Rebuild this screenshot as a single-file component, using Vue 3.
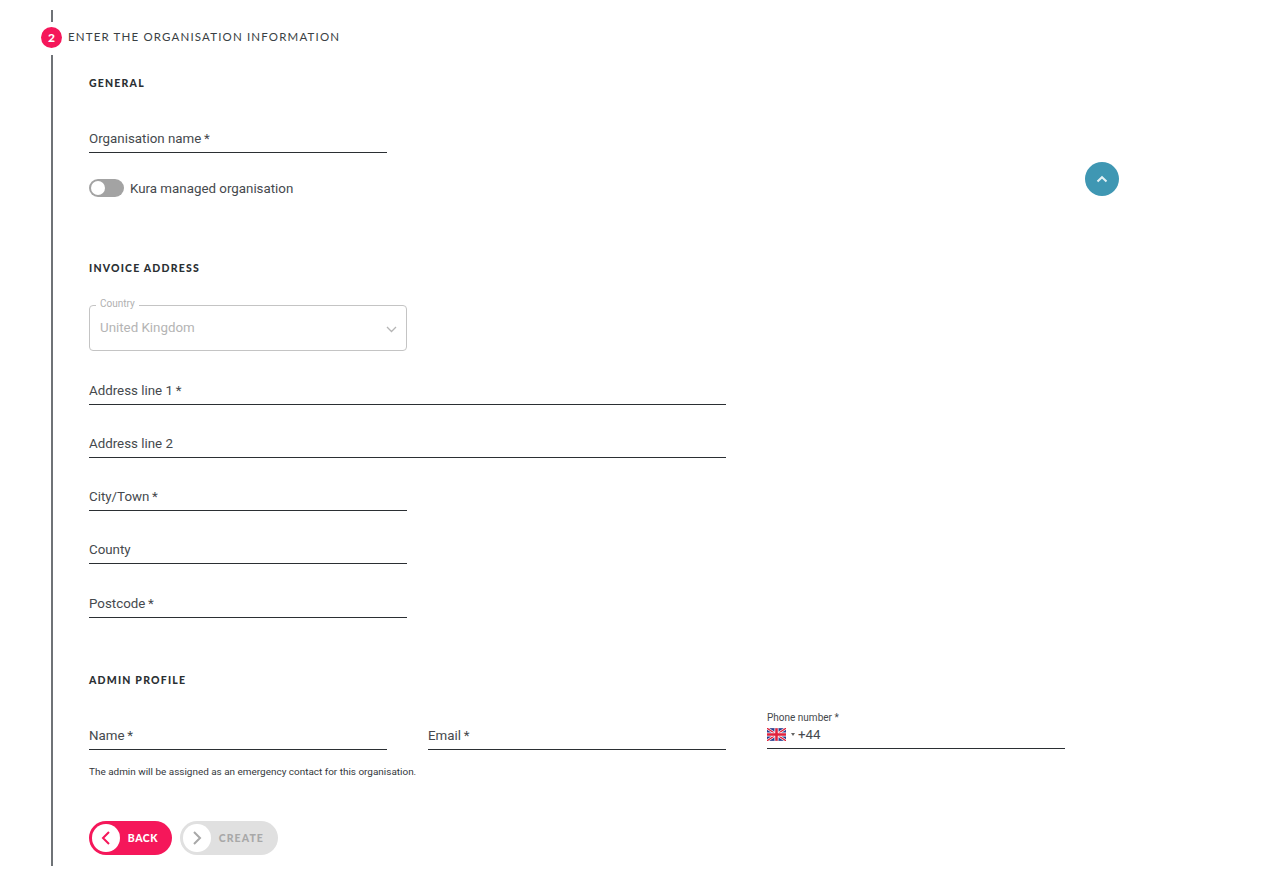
<template>
  <div class="page">
    <div class="stem"></div>
    <div class="step-head">
      <span class="step-badge">2</span>
      <span class="step-title">ENTER THE ORGANISATION INFORMATION</span>
    </div>

    <div class="step-body">
      <h3 class="section-title first">GENERAL</h3>
      <div class="field w-name first-field"><span>Organisation name&thinsp;*</span></div>

      <div class="toggle-row">
        <span class="toggle"><i></i></span>
        <span class="toggle-label">Kura managed organisation</span>
      </div>

      <h3 class="section-title invoice">INVOICE ADDRESS</h3>
      <div class="select-box">
        <span class="select-legend">Country</span>
        <span class="select-value">United Kingdom</span>
        <svg class="select-arrow" width="11" height="7" viewBox="0 0 11 7">
          <path d="M1 1 5.5 5.5 10 1" fill="none" stroke="#b5b5b5" stroke-width="1.3" />
        </svg>
      </div>

      <div class="address-fields">
        <div v-for="f in addressFields" :key="f.label" class="field" :class="f.size">
          <span>{{ f.label }}</span>
        </div>
      </div>

      <h3 class="section-title admin">ADMIN PROFILE</h3>
      <div class="admin-row">
        <div class="field w-name"><span>Name&thinsp;*</span></div>
        <div class="field w-name"><span>Email&thinsp;*</span></div>
        <div class="phone">
          <label>Phone number *</label>
          <div class="phone-input">
            <svg width="19" height="13" viewBox="0 0 60 40">
              <rect width="60" height="40" fill="#2a3c8f" />
              <path d="M0 0 60 40M60 0 0 40" stroke="#fff" stroke-width="8" />
              <path d="M0 0 60 40M60 0 0 40" stroke="#e0213c" stroke-width="4" />
              <path d="M30 0V40M0 20H60" stroke="#fff" stroke-width="13" />
              <path d="M30 0V40M0 20H60" stroke="#e0213c" stroke-width="8" />
            </svg>
            <i class="caret"></i>
            <span>+44</span>
          </div>
        </div>
      </div>
      <p class="hint">The admin will be assigned as an emergency contact for this organisation.</p>

      <div class="actions">
        <button class="btn btn-back" type="button">
          <span class="btn-icon">
            <svg width="10" height="16" viewBox="0 0 10 16">
              <path d="M8 2 2 8 8 14" fill="none" stroke="#f5175a" stroke-width="2" />
            </svg>
          </span>
          BACK
        </button>
        <button class="btn btn-create" type="button" disabled>
          <span class="btn-icon">
            <svg width="10" height="16" viewBox="0 0 10 16">
              <path d="M2 2 8 8 2 14" fill="none" stroke="#a8a8a8" stroke-width="2" />
            </svg>
          </span>
          CREATE
        </button>
      </div>
    </div>

    <button class="scroll-top" type="button" aria-label="Scroll to top">
      <svg width="12" height="8" viewBox="0 0 12 8">
        <path d="M1.5 6.5 6 2.2 10.5 6.5" fill="none" stroke="#e4f1f5" stroke-width="2" />
      </svg>
    </button>
  </div>
</template>

<script setup>
const addressFields = [
  { label: 'Address line 1\u2009*', size: 'w-full' },
  { label: 'Address line 2', size: 'w-full' },
  { label: 'City/Town\u2009*', size: 'w-short' },
  { label: 'County', size: 'w-short' },
  { label: 'Postcode\u2009*', size: 'w-short' }
]
</script>

<style>
html,
body {
  background: #fff;
}
</style>

<style scoped>
.page {
  position: relative;
  height: 895px;
  padding-top: 10px;
  box-sizing: border-box;
  overflow: hidden;
  font-family: Roboto, "Liberation Sans", sans-serif;
  color: #2b2f33;
}

.stem {
  width: 2px;
  height: 12px;
  margin-left: 51px;
  background: #6f7377;
}

.step-head {
  display: flex;
  align-items: center;
  gap: 6px;
  height: 33px;
  margin-left: 41px;
  padding-bottom: 2px;
  box-sizing: border-box;
}

.step-badge {
  display: flex;
  align-items: center;
  justify-content: center;
  width: 21px;
  height: 21px;
  border-radius: 50%;
  background: #f5175a;
  color: #fff;
  font-family: Lato, sans-serif;
  font-size: 12px;
  font-weight: 900;
}

.step-title {
  margin-top: -2px;
  font-family: Lato, sans-serif;
  font-size: 11.5px;
  letter-spacing: 1.16px;
  color: #3a3f44;
}

.step-body {
  height: 811px;
  margin-left: 51px;
  padding-left: 36px;
  border-left: 2px solid #6f7377;
  box-sizing: border-box;
}

.section-title {
  margin: 0;
  font-family: Lato, sans-serif;
  font-size: 10.5px;
  line-height: 14px;
  font-weight: 900;
  letter-spacing: 1.2px;
  color: #2b2f33;
}

.section-title.first {
  padding-top: 21px;
}

.section-title.invoice {
  margin-top: 64px;
}

.section-title.admin {
  margin-top: 55px;
}

.field {
  display: flex;
  align-items: flex-end;
  height: 32px;
  padding-bottom: 4px;
  box-sizing: border-box;
  border-bottom: 1px solid #2b2f33;
  font-size: 13.33px;
  line-height: 18px;
  color: #45494d;
}

.first-field {
  margin-top: 31px;
}

.w-name {
  width: 298px;
}

.w-full {
  width: 637px;
}

.w-short {
  width: 318px;
}

.toggle-row {
  display: flex;
  align-items: flex-start;
  gap: 6px;
  height: 18px;
  margin-top: 26px;
}

.toggle {
  display: flex;
  align-items: center;
  width: 35px;
  height: 18px;
  padding-left: 2px;
  box-sizing: border-box;
  border-radius: 9px;
  background: #a3a3a3;
}

.toggle i {
  width: 14px;
  height: 14px;
  border-radius: 50%;
  background: #fff;
}

.toggle-label {
  font-size: 13.33px;
  line-height: 20px;
  color: #45494d;
}

.select-box {
  position: relative;
  display: flex;
  align-items: center;
  justify-content: space-between;
  width: 318px;
  height: 46px;
  margin-top: 30px;
  padding: 0 9px 0 10px;
  box-sizing: border-box;
  border: 1px solid #c4c4c4;
  border-radius: 4px;
}

.select-legend {
  position: absolute;
  top: -8px;
  left: 6px;
  padding: 0 4px;
  background: #fff;
  font-size: 10px;
  line-height: 12px;
  color: #b0b0b0;
}

.select-value {
  margin-top: -2px;
  font-size: 13.33px;
  color: #b4b4b4;
}

.select-arrow {
  margin-top: 3px;
}

.address-fields {
  display: flex;
  flex-direction: column;
  gap: 21.15px;
  margin-top: 22px;
}

.admin-row {
  display: flex;
  align-items: flex-end;
  gap: 41px;
  margin-top: 25.6px;
}

.phone {
  width: 298px;
  height: 37px;
  margin-bottom: 1px;
  border-bottom: 1px solid #2b2f33;
  box-sizing: border-box;
}

.phone label {
  display: block;
  font-size: 10px;
  line-height: 12px;
  color: #45494d;
}

.phone-input {
  display: flex;
  align-items: center;
  height: 21px;
  font-size: 13.33px;
  color: #45494d;
}

.caret {
  width: 0;
  height: 0;
  margin: 0 3px 0 5px;
  border-left: 2px solid transparent;
  border-right: 2px solid transparent;
  border-top: 3px solid #666;
}

.hint {
  margin: 15px 0 0;
  font-size: 9.95px;
  line-height: 14px;
  color: #33373b;
}

.actions {
  display: flex;
  gap: 8px;
  margin-top: 42px;
}

.btn {
  display: flex;
  align-items: center;
  height: 34px;
  padding: 0 14px 0 3px;
  border: 0;
  border-radius: 17px;
  font-family: Lato, sans-serif;
  font-size: 10.5px;
  font-weight: 900;
  letter-spacing: 0.5px;
}

.btn-back {
  width: 83px;
  background: #f5175a;
  color: #fff;
}

.btn-create {
  width: 98px;
  background: #e0e0e0;
  color: #a8a8a8;
  letter-spacing: 1.1px;
}

.btn-icon {
  display: flex;
  align-items: center;
  justify-content: center;
  width: 28px;
  height: 28px;
  margin-right: 8px;
  border-radius: 50%;
  background: #fff;
}

.scroll-top {
  position: absolute;
  top: 162px;
  left: 1085px;
  display: flex;
  align-items: center;
  justify-content: center;
  width: 34px;
  height: 34px;
  padding: 0;
  border: 0;
  border-radius: 50%;
  background: #3f97b3;
}
</style>
